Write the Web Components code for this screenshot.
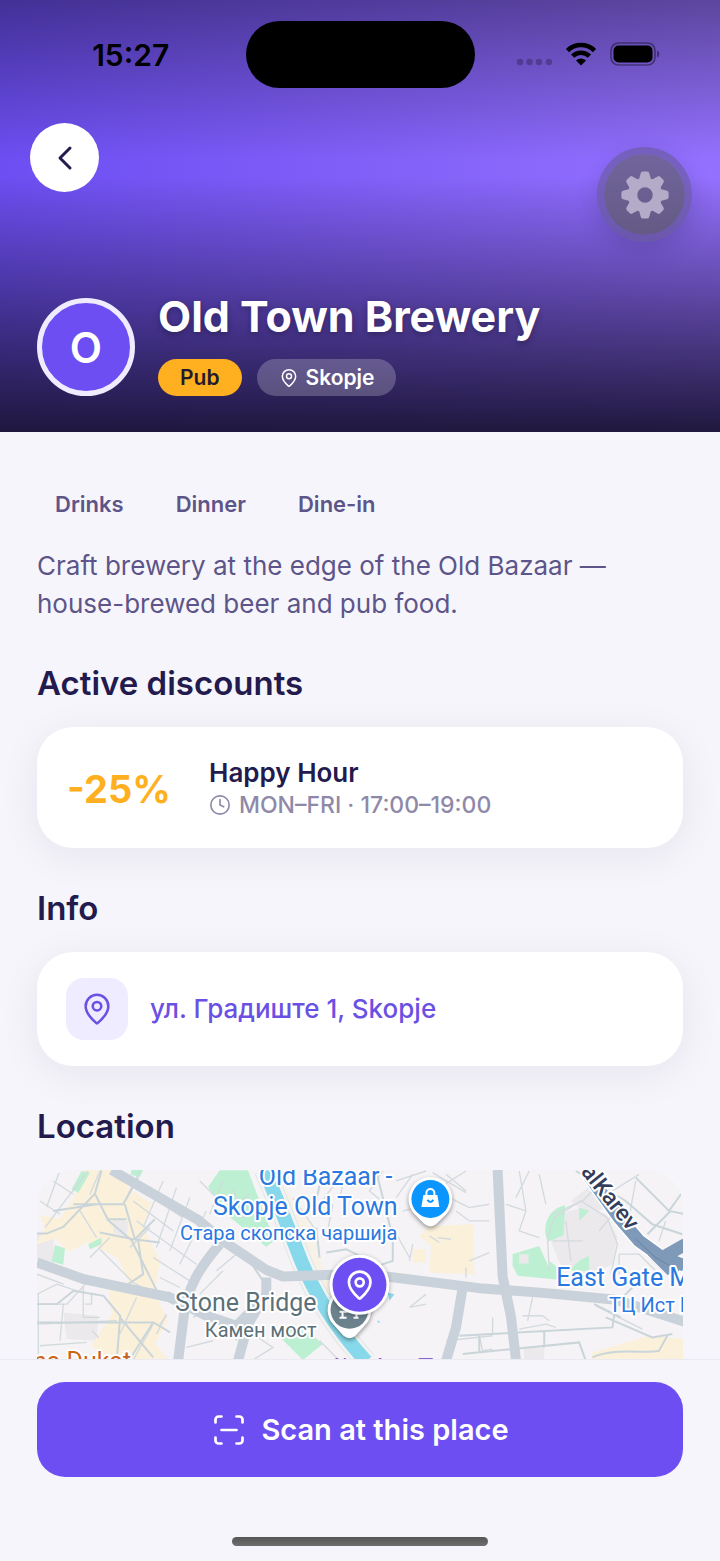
<!DOCTYPE html>
<html lang="en">
<head>
<meta charset="utf-8">
<meta name="viewport" content="width=device-width, initial-scale=1">
<title>Old Town Brewery</title>
<style>
  body {
    margin: 0;
    background: #f6f5fb;
    color: #231a4d;
    font-family: Inter, "Noto Sans", sans-serif;
  }
</style>
</head>
<body>
<place-screen>
  <place-hero slot="hero" name="Old Town Brewery" initial="O" category="Pub" city="Skopje"></place-hero>
  <place-tags>
    <span>Drinks</span>
    <span>Dinner</span>
    <span>Dine-in</span>
  </place-tags>
  <p>Craft brewery at the edge of the Old Bazaar — house-brewed beer and pub food.</p>
  <h2>Active discounts</h2>
  <discount-card amount="-25%" name="Happy Hour">MON–FRI · 17:00–19:00</discount-card>
  <h2>Info</h2>
  <address-card href="#map">ул. Градиште 1, Skopje</address-card>
  <h2>Location</h2>
  <place-map id="map"></place-map>
  <scan-bar slot="footer">Scan at this place</scan-bar>
</place-screen>

<script>
  const PIN = '<path d="M20 10c0 4.99-5.54 10.19-7.4 11.8a1 1 0 0 1-1.2 0C9.54 20.19 4 14.99 4 10a8 8 0 0 1 16 0"/><circle cx="12" cy="10" r="3"/>';

  const ICONS = {
    back: '<path d="m15 18-6-6 6-6"/>',
    pin: PIN,
    clock: '<circle cx="12" cy="12" r="10"/><path d="M12 6v6l4 2"/>',
    scan: '<path d="M3 7V5a2 2 0 0 1 2-2h2M17 3h2a2 2 0 0 1 2 2v2M21 17v2a2 2 0 0 1-2 2h-2M7 21H5a2 2 0 0 1-2-2v-2M7 12h10"/>',
  };

  // Line icon, sized by the width and height of the host
  class LineIcon extends HTMLElement {
    constructor() {
      super();
      this.attachShadow({ mode: 'open' });
    }

    connectedCallback() {
      this.shadowRoot.innerHTML = `
      <style>
        :host { display: block; flex: none; width: 24px; height: 24px; }
        svg { display: block; width: 100%; height: 100%; }
      </style>
      <svg viewBox="0 0 24 24" fill="none" stroke="currentColor" stroke-width="1.8"
        stroke-linecap="round" stroke-linejoin="round" aria-hidden="true">${ICONS[this.getAttribute('name')]}</svg>
      `;
    }
  }

  class PlaceScreen extends HTMLElement {
    constructor() {
      super();
      this.attachShadow({ mode: 'open' });
      this.shadowRoot.innerHTML = `
      <style>
        :host {
          display: flex;
          flex-direction: column;
          min-height: 100vh;
        }

        main {
          flex: 1;
          display: flex;
          flex-direction: column;
          padding: 54px 37px 0;
        }

        ::slotted(p) {
          margin: 25px 0 0;
          font-size: 26px;
          line-height: 38px;
          color: #5d5589;
        }

        ::slotted(h2) {
          margin: 38px 0 22px;
          font-size: 33px;
          line-height: 44px;
          font-weight: 600;
        }

        ::slotted(place-map) {
          flex: 1;
        }
      </style>
      <slot name="hero"></slot>
      <main><slot></slot></main>
      <slot name="footer"></slot>
      `;
    }
  }

  class StatusBar extends HTMLElement {
    constructor() {
      super();
      this.attachShadow({ mode: 'open' });
      this.shadowRoot.innerHTML = `
      <style>
        :host {
          display: grid;
          grid-template-columns: 1fr 229px 1fr;
          align-items: center;
          color: #000;
        }

        time {
          padding-left: 16px;
          text-align: center;
          font-size: 30px;
          line-height: 36px;
          font-weight: 600;
        }

        .island {
          height: 67px;
          border-radius: 34px;
          background: #000;
        }

        .signs {
          display: flex;
          justify-content: flex-end;
          align-items: center;
          gap: 14px;
          padding: 0 60px 2px 0;
        }

        svg { display: block; }
      </style>
      <time>15:27</time>
      <div class="island"></div>
      <div class="signs">
        <svg width="36" height="24" viewBox="0 0 36 24" fill="#000" fill-opacity=".25">
          <circle cx="4" cy="20" r="3.200"/><circle cx="13.500" cy="20" r="3.200"/><circle cx="23" cy="20" r="3.200"/><circle cx="33" cy="20" r="3.200"/>
        </svg>
        <svg width="30" height="24" viewBox="0 0 30 24" fill="none" stroke="#000" stroke-width="4.600">
          <path d="M1.500 8.500a19.500 19.500 0 0 1 27 0"/>
          <path d="M6.600 14.200a12 12 0 0 1 16.800 0"/>
          <path d="M15 23.500l-5-5a7 7 0 0 1 10 0z" fill="#000" stroke="none"/>
        </svg>
        <svg width="50" height="24" viewBox="0 0 50 24">
          <rect x="1" y="1" width="44" height="22" rx="7.500" fill="none" stroke="#000" stroke-opacity=".4" stroke-width="1.700"/>
          <rect x="3.500" y="3.500" width="39" height="17" rx="5"/>
          <path d="M47 8.500c3.200 1 3.200 6 0 7z" fill-opacity=".4"/>
        </svg>
      </div>
      `;
    }
  }

  class PlaceHero extends HTMLElement {
    constructor() {
      super();
      this.attachShadow({ mode: 'open' });
    }

    connectedCallback() {
      const tooth = '<path d="M-6-15.500-4.200-22q.4-1.600 2-1.600h4.400q1.600 0 2 1.600l1.800 6.500z"/>';
      let teeth = '';
      for (let a = 0; a < 360; a += 45) {
        teeth += `<g transform="rotate(${a})">${tooth}</g>`;
      }

      this.shadowRoot.innerHTML = `
      <style>
        :host {
          display: block;
          padding: 21px 0 36px;
          color: #fff;
          background:
            linear-gradient(to bottom, rgba(0, 0, 0, .38), rgba(0, 0, 0, .06) 31%, rgba(0, 0, 0, 0) 37%, rgba(0, 0, 0, 0) 41%, rgba(28, 21, 56, .1) 47%, rgba(28, 21, 56, .97)),
            linear-gradient(to right, #6c4ef2, #9571ff);
        }

        nav {
          display: flex;
          justify-content: space-between;
          align-items: flex-start;
          padding: 35px 28px 0 30px;
        }

        button {
          display: flex;
          align-items: center;
          justify-content: center;
          box-sizing: border-box;
          border: 0;
          padding: 0;
          border-radius: 50%;
        }

        .back {
          width: 69px;
          height: 69px;
          background: #fff;
          color: #231a4d;
        }

        .back line-icon { width: 40px; height: 40px; }

        .settings {
          width: 95px;
          height: 95px;
          margin-top: 24px;
          border: 7px solid rgba(100, 88, 150, .6);
          background: linear-gradient(#71659c, #645a85);
          background-clip: padding-box;
          box-shadow: 0 8px 22px rgba(50, 40, 90, .22);
        }

        .profile {
          display: flex;
          align-items: flex-end;
          gap: 23px;
          padding: 46px 37px 0;
        }

        .avatar {
          flex: none;
          display: flex;
          align-items: center;
          justify-content: center;
          box-sizing: border-box;
          width: 98px;
          height: 98px;
          border: 5px solid #f0ecff;
          border-radius: 50%;
          background: #6c4ef2;
          font-size: 42px;
          font-weight: 600;
        }

        h1 {
          margin: 0 0 15px;
          font-size: 43px;
          line-height: 56px;
          font-weight: 700;
          text-shadow: 0 2px 6px rgba(0, 0, 0, .3);
        }

        .badges { display: flex; gap: 15px; }

        .badge {
          display: flex;
          align-items: center;
          gap: 7px;
          padding: 0 22px;
          border-radius: 19px;
          font-size: 21px;
          line-height: 37px;
          font-weight: 600;
          background: rgba(255, 255, 255, .22);
        }

        .badge line-icon { width: 20px; height: 20px; }

        .category {
          background: #ffb020;
          color: #231a2d;
        }
      </style>
      <status-bar></status-bar>
      <nav>
        <button class="back" aria-label="Back"><line-icon name="back"></line-icon></button>
        <button class="settings" aria-label="Settings">
          <svg width="48" height="48" viewBox="-24 -24 48 48" fill="#b3abc8">
            <circle r="12.500" fill="none" stroke="#b3abc8" stroke-width="9.500"/>${teeth}
          </svg>
        </button>
      </nav>
      <div class="profile">
        <div class="avatar">${this.getAttribute('initial')}</div>
        <div>
          <h1>${this.getAttribute('name')}</h1>
          <div class="badges">
            <span class="badge category">${this.getAttribute('category')}</span>
            <span class="badge"><line-icon name="pin"></line-icon>${this.getAttribute('city')}</span>
          </div>
        </div>
      </div>
      `;
    }
  }

  class PlaceTags extends HTMLElement {
    constructor() {
      super();
      this.attachShadow({ mode: 'open' });
      this.shadowRoot.innerHTML = `
      <style>
        :host {
          display: flex;
          flex-wrap: wrap;
          gap: 16px;
          font-size: 22px;
          line-height: 36px;
          font-weight: 600;
          color: #5d5589;
        }

        ::slotted(span) { padding: 0 18px; }
      </style>
      <slot></slot>
      `;
    }
  }

  class DiscountCard extends HTMLElement {
    constructor() {
      super();
      this.attachShadow({ mode: 'open' });
    }

    connectedCallback() {
      this.shadowRoot.innerHTML = `
      <style>
        :host {
          display: flex;
          align-items: center;
          padding: 29px 30px 27px;
          border-radius: 36px;
          background: #fff;
          box-shadow: 0 8px 40px rgba(35, 26, 77, .07);
        }

        .amount {
          min-width: 142px;
          font-size: 38px;
          font-weight: 700;
          color: #ffb020;
        }

        h3 {
          margin: 0;
          font-size: 26px;
          line-height: 33px;
          font-weight: 600;
        }

        .hours {
          display: flex;
          align-items: center;
          gap: 8px;
          font-size: 23px;
          line-height: 32px;
          font-weight: 500;
          color: #8f89a9;
        }

        line-icon { width: 22px; height: 22px; }
      </style>
      <div class="amount">${this.getAttribute('amount')}</div>
      <div>
        <h3>${this.getAttribute('name')}</h3>
        <div class="hours"><line-icon name="clock"></line-icon><slot></slot></div>
      </div>
      `;
    }
  }

  class AddressCard extends HTMLElement {
    constructor() {
      super();
      this.attachShadow({ mode: 'open' });
    }

    connectedCallback() {
      this.shadowRoot.innerHTML = `
      <style>
        :host {
          display: block;
          padding: 26px 29px;
          border-radius: 36px;
          background: #fff;
          box-shadow: 0 8px 40px rgba(35, 26, 77, .07);
        }

        a {
          display: flex;
          align-items: center;
          gap: 22px;
          font-size: 26px;
          line-height: 32px;
          font-weight: 500;
          color: #6b50e4;
          text-decoration: none;
        }

        .icon {
          padding: 14px;
          border-radius: 18px;
          background: #f0ecff;
        }

        line-icon { width: 34px; height: 34px; }
      </style>
      <a href="${this.getAttribute('href')}">
        <span class="icon"><line-icon name="pin"></line-icon></span>
        <slot></slot>
      </a>
      `;
    }
  }

  class PlaceMap extends HTMLElement {
    constructor() {
      super();
      this.attachShadow({ mode: 'open' });
      this.shadowRoot.innerHTML = `
      <style>
        :host {
          display: block;
          border-radius: 36px 36px 0 0;
          overflow: hidden;
          background: #f5f3f5;
        }

        svg { display: block; width: 100%; }

        .local path { fill: none; stroke: #d3dade; stroke-width: 4; }
        .minor path { fill: none; stroke: #cad5da; stroke-width: 6; }
        .main path { fill: none; stroke: #c9d2da; stroke-width: 30; stroke-linejoin: round; }
        .park path { fill: #bdf0d2; }
        .shops path { fill: #fbf0d9; }
        .block path { fill: #ebe9eb; }

        text {
          paint-order: stroke;
          stroke: #fff;
          stroke-width: 4px;
          stroke-linejoin: round;
          font-family: Roboto, sans-serif;
          font-size: 25px;
          fill: #2a78e0;
        }

        .small { font-size: 20px; }
        .grey { fill: #5b7078; }
        .street { font-size: 23px; font-weight: 500; fill: #333d5c; }
        .food { fill: #cb6418; }
        .end { text-anchor: end; }
      </style>
      <svg viewBox="0 0 647 189" preserveAspectRatio="xMidYMin slice" role="img" aria-label="Map of Skopje">
        <g transform="translate(-17 -9) scale(.33333)">
          <g class="block">
            <path d="M51 215l50 15v80l-50-10zM130 455l105 10-5 75-90-5zM1655 120l50-40 50 60-40 30zM1590 230l30-70 70-20 70 20 35 70-15 80-60 30-90-15zM1515 560h60v40h-60z"/>
          </g>
          <g class="shops">
            <path d="M190 28h85l60 60 60 40-25 70 50 100-15 100 40 80-40 70 45 55-35 60h-75l-80-50-45-60 60-90-10-80 60-20-30-70-90-50-60 30-40-40-60 20 30-50-15-40 60 10 40-60z"/>
            <path d="M1230 195l130-5 5 150-135-5 5-80-35-30zM1180 265h40v40h-40zM1720 575l170-50 105 10v70h-280z"/>
            <path d="M760 28l105 150 80 240-60 10-100-200z" opacity=".5"/>
          </g>
          <g class="block"><path d="M280 175l45 5-5 50-40-15z"/></g>
          <g class="park">
            <path d="M185 30l25 5-35 60-20-10zM105 252l30 10-5 50-35-10zM205 250l40-20v20l-35 15zM335 27h35l-10 22-28-8zM600 28h85l60 160 20 50-25 20-110-90-65-90zM1480 280l80-25 45 100-110-10-15-30zM1580 190q10-45 58-58l-5 90-45 20q-15-20-8-52zM1680 140l30 10-30 30zM1590 300l25 20v40l-25-15zM1680 300l30-15v45h-60zM790 495l60 5 60 50-60 48-70-70z"/>
          </g>
          <g class="block"><path d="M1500 280h28v28h-28z"/></g>
          <path d="M735 27c50 120 70 170 95 235 40 110 100 220 210 340" fill="none" stroke="#dfe7e5" stroke-width="64"/>
          <path d="M735 27c50 120 70 170 95 235 40 110 100 220 210 340" fill="none" stroke="#f4f3f4" stroke-width="58"/>
          <path d="M735 27c50 120 70 170 95 235 40 110 100 220 210 340" fill="none" stroke="#87d8ea" stroke-width="42"/>
          <path d="M1105 395l20 5-15 20zM1075 480l5 0v6h-6z" fill="#8fd8ea"/>
          <g class="local">
            <path d="M60 120l60 40M75 200l60-80 70-90M51 430h90l60-65 80 10M51 490l240-10M60 555l140-10M55 400v200M130 430l-10 110M190 380v90h50M51 400l60-30 60 20M215 395v35h-20M240 265l100 100 90 50M360 30l-50 100M430 60l-60 140M470 80l-60 180M510 110l-60 160M560 150l-80 160M380 100l110 70M340 120l120 90M350 180l180 130M400 290l110 70M330 260l60-60M420 350l60 30"/>
            <path d="M560 200l60 60M610 60l-40 100M640 80l30 90M690 100l-80 60M540 60l60 60M820 110l70 100M940 130l-20 100M960 50l-60 80M980 40l-20 70M590 330l60-50 60 40M540 400l70-70M520 470l40-20 70 30 20 60M500 560l80-20M560 490v40"/>
            <path d="M700 520l60 40-60 38M900 540l60 60M180 150l50 80M270 230l-60 60M100 60l60 40M120 28l-40 110M240 30l-30 70M51 340l80 30M350 410l-50 110M400 490l-60 108M440 460l-30 60"/>
            <path d="M1090 30l-40 60 60 50M1180 40l-50 70M1130 60l90-30M1280 40l60 50M1260 80l80-50M1290 110l60 30 60-10M1240 35l100 60M1310 150l40 30h60M1120 200l50 90M1150 150l90-20M1350 300l60-25M1340 320v30M1180 250l-10 50M1500 30l20 120-20 60 60 20M1460 130l60 20M1530 30l-40 80M1560 40l20 90M1600 160l90-40 60-60M1600 240h90M1640 180l15 120M1700 60l90 90-50 60M1780 90l80-50M1850 60l-20 110"/>
            <path d="M1800 280h60l60 60M1800 280v60M1590 330l-5-100 20-60 80-50 80 50 30 80-20 90M1220 430l-50 10M1170 440l50-40M1280 540l140-15M1380 525l10 45 30-5M1420 470v50M1540 410l-15 70M1590 480l-20-15h-60M1730 435l140 70M1750 400l140 60M1940 180l-20 60M1500 505l80-15 30 10"/>
            <path d="M216 510l20 20M420 490l20-25M1230 225l30 20M1255 230l40 5" stroke="#a8d8b8"/>
          </g>
          <g class="minor">
            <path d="M245 28l-20 70-95 100-50 20h-30M225 98l40 80 70 60 60 120 30 60M160 130h150l45-80M315 130l30 105M100 150l130-20M260 175h60M240 215l100 20 80 10M345 235l60-60M51 430h60l50-40 90 15 50 60-10 130M51 485h350l50 30M300 470l100 120M400 485l-70 110M355 240l15 100-60 40M670 270l60 90"/>
            <path d="M1070 30l20 80 30 120v70l-60 20M910 30l-25 110M900 290l-10-90M920 275l60-10 60 30M1320 525l460-25 10-70 50-50M1330 580l350-35 20 55M1575 510v50M1720 590c70-30 150-10 200-20l25-45M1760 470l140 60 60-10M1850 50l100 100 50 10M1955 150l-70 70M1950 150l50-70M1670 30l150 90 80 70 90 30M1725 430l80 40M1380 525v50"/>
          </g>
          <g class="main">
            <path d="M51 305l140 50 260 55"/>
            <path d="M275 27l260 150 85 70 120 80 50 20 150-5 160 5 280 35 200 15 210 20 220 70 160 55" stroke-width="34"/>
            <path d="M600 250c-60 70-100 130-110 230l-15 120M1435 27l15 320 25 120 15 130M740 350v50l-55 90-30 110M1330 380l-20 120-30 100" stroke-width="26"/>
            <path d="M440 405l120 60 90 30 60-60" stroke-width="22"/>
          </g>
          <path d="M1700 30l100 140 60 70 70 50 70 25" fill="none" stroke="#fff" stroke-width="46"/>
          <path d="M1700 30l100 140 60 70 70 50 70 25M1930 290l70-40M1900 270l60 60" fill="none" stroke="#7f99b8" stroke-width="38"/>
          <path d="M1850 235l60 55 70 40" fill="none" stroke="#6783a6" stroke-width="3"/>
          <path d="M1198 592h42v5h-42zM948 592h8v5h-8zM973 592h6v5h-6zM1078 592h8v5h-8z" fill="#8d5fd0"/>
        </g>
        <text class="end" x="356" y="15">Old Bazaar -</text>
        <text class="end" x="361" y="45">Skopje Old Town</text>
        <text class="end small" x="361" y="70">Стара скопска чаршија</text>
        <text class="end grey" x="280" y="141">Stone Bridge</text>
        <text class="end grey small" x="280" y="167">Камен мост</text>
        <text x="520" y="116">East Gate M</text>
        <text class="small" x="573" y="142">ТЦ Ист Г</text>
        <text class="street" transform="translate(544 2) rotate(51)">alKarev</text>
        <text class="food" x="-4" y="200">na Dukat</text>
        <g filter="drop-shadow(0 2px 2px rgba(0,0,0,.4))">
          <path d="M394 7a22 22 0 0 1 15 38l-9 9q-6 5-12 0l-9-9a22 22 0 0 1 15-38z" fill="#fff"/>
        </g>
        <circle cx="394" cy="29" r="19" fill="#0a95ff"/>
        <path d="M387 25h14l2 12h-18z" fill="#fff"/>
        <path d="M390 27v-4a4 4 0 0 1 8 0v4" fill="none" stroke="#fff" stroke-width="2"/>
        <path d="M391 30q3 4 6 0" fill="none" stroke="#0a95ff" stroke-width="2"/>
        <g filter="drop-shadow(0 2px 2px rgba(0,0,0,.4))">
          <path d="M313 118a22 22 0 0 1 15 38l-9 10q-6 5-12 0l-9-10a22 22 0 0 1 15-38z" fill="#fff"/>
        </g>
        <circle cx="313" cy="140" r="19" fill="#6b818c"/>
        <path d="M303 142h8M303 148h7M306 142v6M315 142h8M317 148h5M320 142v6" stroke="#fff" stroke-width="2"/>
        <circle cx="323" cy="115" r="30" fill="#fff" filter="drop-shadow(0 1px 2px rgba(0,0,0,.3))"/>
        <circle cx="323" cy="115" r="27" fill="#6c4ef2"/>
        <g transform="translate(307 99) scale(1.350)" fill="none" stroke="#fff" stroke-width="2" stroke-linejoin="round">${PIN}</g>
      </svg>
      `;
    }
  }

  class ScanBar extends HTMLElement {
    constructor() {
      super();
      this.attachShadow({ mode: 'open' });
      this.shadowRoot.innerHTML = `
      <style>
        :host {
          display: flex;
          flex-direction: column;
          align-items: center;
          gap: 60px;
          padding: 22px 37px 15px;
          border-top: 1px solid #ebe9f2;
          background: #f6f5fb;
        }

        button {
          display: flex;
          align-items: center;
          justify-content: center;
          gap: 14px;
          width: 100%;
          height: 95px;
          border: 0;
          border-radius: 28px;
          background: #6c4ef2;
          color: #fff;
          font: 600 29px Inter, sans-serif;
        }

        line-icon { width: 36px; height: 36px; }

        .home {
          width: 256px;
          height: 9px;
          border-radius: 5px;
          background: linear-gradient(#555, #6e6e6e);
        }
      </style>
      <button><line-icon name="scan"></line-icon><slot></slot></button>
      <div class="home"></div>
      `;
    }
  }

  // Define the custom elements
  customElements.define('line-icon', LineIcon);
  customElements.define('status-bar', StatusBar);
  customElements.define('place-hero', PlaceHero);
  customElements.define('place-tags', PlaceTags);
  customElements.define('discount-card', DiscountCard);
  customElements.define('address-card', AddressCard);
  customElements.define('place-map', PlaceMap);
  customElements.define('scan-bar', ScanBar);
  customElements.define('place-screen', PlaceScreen);
</script>
</body>
</html>
